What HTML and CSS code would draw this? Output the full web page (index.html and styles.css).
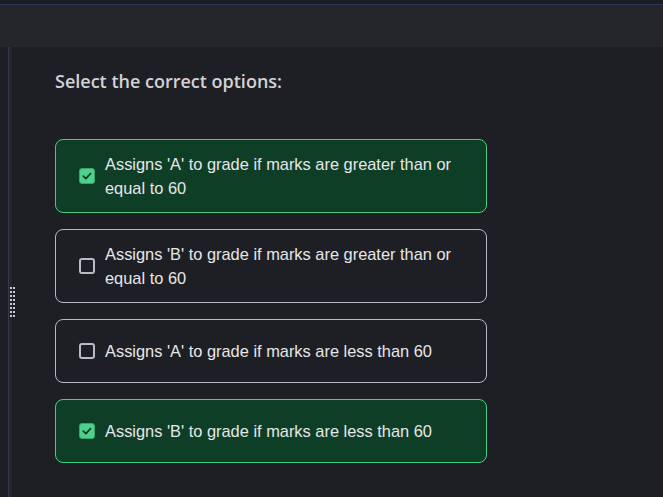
FILE: index.html
```html
<!DOCTYPE html>
<html>
<head>
<meta charset="utf-8">
<link rel="stylesheet" href="styles.css">
</head>
<body>
<div class="app">
  <header class="topbar">
    <div class="topstrip"></div>
    <div class="toolbar"></div>
  </header>
  <div class="workspace">
    <aside class="sidebar"></aside>
    <div class="splitter">
      <div class="grip">
        <span></span><span></span><span></span><span></span><span></span><span></span><span></span><span></span>
        <span></span><span></span><span></span><span></span><span></span><span></span><span></span><span></span>
      </div>
    </div>
    <main class="content">
      <h2 class="title">Select the correct options:</h2>
      <div class="options">
        <label class="option selected">
          <span class="box"><svg viewBox="0 0 16 16" width="16" height="16"><path d="M3.8 8.2 L6.7 10.9 L12 5.4" fill="none" stroke="#123a26" stroke-width="2" stroke-linecap="round" stroke-linejoin="round"/></svg></span>
          <span class="text">Assigns 'A' to grade if marks are greater than or equal to 60</span>
        </label>
        <label class="option">
          <span class="box"></span>
          <span class="text">Assigns 'B' to grade if marks are greater than or equal to 60</span>
        </label>
        <label class="option">
          <span class="box"></span>
          <span class="text">Assigns 'A' to grade if marks are less than 60</span>
        </label>
        <label class="option selected">
          <span class="box"><svg viewBox="0 0 16 16" width="16" height="16"><path d="M3.8 8.2 L6.7 10.9 L12 5.4" fill="none" stroke="#123a26" stroke-width="2" stroke-linecap="round" stroke-linejoin="round"/></svg></span>
          <span class="text">Assigns 'B' to grade if marks are less than 60</span>
        </label>
      </div>
    </main>
  </div>
</div>
</body>
</html>
```
FILE: styles.css
```css
* { box-sizing: border-box; }
html, body {
  margin: 0;
  padding: 0;
  height: 100%;
  background: #1e1f24;
  overflow: hidden;
}
.app {
  display: flex;
  flex-direction: column;
  height: 100%;
}
.topbar { flex: none; }
.topstrip {
  height: 5px;
  background: #1b1d23;
  border-bottom: 1px solid #2c3952;
}
.toolbar {
  height: 42px;
  background: #25262c;
}
.workspace {
  flex: 1;
  display: flex;
  min-height: 0;
}
.sidebar {
  width: 9px;
  flex: none;
  background: #1d1f25;
  border-right: 1px solid #333a48;
}
.splitter {
  width: 3px;
  flex: none;
  background: #24262d;
  position: relative;
}
.grip {
  position: absolute;
  left: 1px;
  top: 240px;
  display: grid;
  grid-template-columns: 2px 2px;
  grid-auto-rows: 2px;
  column-gap: 1px;
  row-gap: 2px;
}
.grip span {
  display: block;
  width: 2px;
  height: 2px;
  background: #c8cad0;
}
.content {
  flex: 1;
  padding: 22px 0 0 43px;
  font-family: "Liberation Sans", Arial, sans-serif;
}
.title {
  margin: 0 0 46px 0;
  font-family: "Open Sans", "Noto Sans", sans-serif;
  font-weight: 600;
  font-size: 18px;
  line-height: 24px;
  color: #d2d3d6;
}
.options {
  display: flex;
  flex-direction: column;
  gap: 16px;
  width: 432px;
}
.option {
  display: flex;
  align-items: center;
  gap: 10px;
  min-height: 64px;
  padding: 12px 23px;
  border: 1px solid #b3bac3;
  border-radius: 8px;
  color: #e6e7e9;
  font-size: 16.4px;
  line-height: 24px;
  cursor: pointer;
}
.option.selected {
  background: #0f3e27;
  border-color: #43cf83;
}
.box {
  flex: none;
  width: 16px;
  height: 16px;
  border: 2px solid #b9bcc2;
  border-radius: 3px;
  display: flex;
  align-items: center;
  justify-content: center;
}
.option.selected .box {
  background: #4dd18d;
  border: 1px solid #3aa46c;
}
.box svg { display: block; }
.text { flex: 1; }
```
